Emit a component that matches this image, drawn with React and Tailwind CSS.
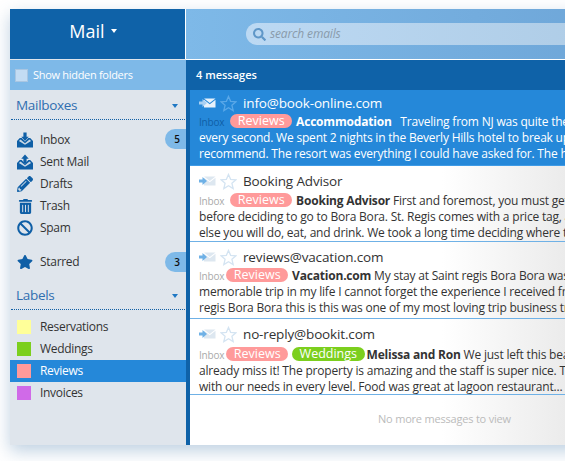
import React from 'react';
import { FaPencilAlt, FaTrashAlt, FaBan, FaStar, FaSearch } from 'react-icons/fa';

const font = "font-['Open_Sans','Noto_Sans',sans-serif]";

function TrayIcon({ up }) {
  return (
    <svg width="17" height="16" viewBox="0 0 17 16" className="text-[#0f5fa6]">
      <path fill="currentColor" d="M0 9 L3 6 H5 L8.5 9.5 L12 6 H14 L17 9 V16 H0 Z" />
      <path fill="#dfe5ec" d="M2 9 L3.8 7.4 L8.5 11.5 L13.2 7.4 L15 9 L8.5 13 Z" opacity="0.9" />
      {up ? (
        <path fill="currentColor" d="M8.5 0 L12.5 4.5 H10.2 V9 H6.8 V4.5 H4.5 Z" />
      ) : (
        <path fill="currentColor" d="M6.8 0 H10.2 V4.5 H12.5 L8.5 9 L4.5 4.5 H6.8 Z" />
      )}
    </svg>
  );
}

function Caret({ className }) {
  return <span className={`w-0 h-0 border-x-[3.5px] border-x-transparent border-t-[4px] ${className}`} />;
}

function SectionHead({ title }) {
  return (
    <div className="h-[30px] mx-[1px] pl-[5px] pr-[7px] pt-[2px] flex items-center justify-between border-b border-dotted border-[#0f5fa6]">
      <span className="text-[13.5px] tracking-[-0.3px] text-[#2f6eb0]">{title}</span>
      <Caret className="border-t-[#1f78c4]" />
    </div>
  );
}

function NavItem({ icon, label, count, height = 'h-[22px]' }) {
  return (
    <div className={`${height} pl-[7px] flex items-center relative text-[12px] tracking-[-0.3px] text-[#333]`}>
      <span className="w-[16px] flex justify-center text-[#0f5fa6]">{icon}</span>
      <span className="ml-[7px]">{label}</span>
      {count && (
        <span className="absolute right-0 top-[1px] w-[21px] h-[20px] rounded-l-full bg-[#7eb9e8] text-[10px] font-semibold text-[#111] flex items-center justify-center pl-[3px]">
          {count}
        </span>
      )}
    </div>
  );
}

function LabelItem({ color, label, active }) {
  return (
    <div className={`h-[22px] pl-[7px] flex items-center text-[12px] tracking-[-0.3px] ${active ? 'bg-[#2588d9] text-white' : 'text-[#333]'}`}>
      <span className={`w-[14px] h-[14px] ${color}`} />
      <span className="ml-[9px]">{label}</span>
    </div>
  );
}

function Pill({ color, children, className = '' }) {
  return (
    <span className={`inline-block h-[14px] leading-[14px] rounded-full px-[7.5px] text-[12.5px] tracking-normal text-white align-[1px] ${color} ${className}`}>
      {children}
    </span>
  );
}

function Row({ from, tags, who, lines, active, top = 'pt-[4px]', height = 'h-[76px]', bodyGap = '', inboxGap = 'ml-[6px]', whoGap = 'ml-[4px]' }) {
  return (
    <div className={`${height} ${top} pl-[9px] overflow-hidden whitespace-nowrap border-b ${active ? 'bg-[#2588d9] text-white border-[#3f9be6]' : 'text-[#333] border-[#6fb1e6]'}`}>
      <div className="h-[22px] flex items-center">
        <svg width="17" height="10" viewBox="0 0 17 10">
          <path fill={active ? '#e8f2fb' : '#dde7f0'} d="M5 0.5 H16.5 L10.75 5 Z M5 1.8 L10.75 6.3 L16.5 1.8 V9.5 H5 Z" />
          <path fill={active ? '#a9d0f2' : '#6fb1e6'} d="M0 3.5 H3.5 V1 L8 5 L3.5 9 V6.5 H0 Z" />
        </svg>
        <svg width="17" height="17" viewBox="0 0 24 24" className="ml-[4px]" fill="none" stroke={active ? '#5aa8e8' : '#d4e4f2'} strokeWidth="1.8">
          <path d="M12 2 L15 9 L22.5 9.6 L16.8 14.5 L18.6 22 L12 18 L5.4 22 L7.2 14.5 L1.5 9.6 L9 9 Z" />
        </svg>
        <span className={`ml-[6px] text-[13.5px] tracking-[-0.15px] ${active ? 'text-white' : 'text-[#333]'}`}>{from}</span>
      </div>
      <div className="text-[12px] tracking-[-0.2px] leading-[16px]">
        <div className={bodyGap}>
          <span className={`text-[10px] ${active ? 'text-[#0f5fa6]' : 'text-[#aaa]'}`}>Inbox</span>
          {tags.map((t, i) => (
            <Pill key={t} color={t === 'Reviews' ? 'bg-[#ff9a9a]' : 'bg-[#7ccf1e]'} className={i === 0 ? inboxGap : 'ml-[4px]'}>
              {t}
            </Pill>
          ))}
          <b className={`${whoGap} font-bold`}>{who}</b> {lines[0]}
        </div>
        <div>{lines[1]}</div>
        <div>{lines[2]}</div>
      </div>
    </div>
  );
}

export default function App() {
  return (
    <div className={`h-[461px] w-[565px] overflow-hidden bg-white pl-[10px] pt-[9px] ${font}`}>
      <div className="w-[600px] h-[436px] flex shadow-[0_6px_16px_rgba(70,120,170,0.35)]">
        {/* Sidebar */}
        <div className="w-[176px] shrink-0 flex flex-col bg-[#dfe5ec]">
          <div className="h-[50px] bg-[#0f62a8] border-r border-white flex items-center justify-center gap-[6px] pr-[9px] pb-[6px] text-white text-[18px]">
            Mail
            <Caret className="border-t-white" />
          </div>
          <div className="h-[30px] mt-[1px] bg-[#7eb9e8] flex items-center pl-[5px] text-[11px] tracking-[-0.3px] text-white">
            <span className="w-[13px] h-[13px] bg-[#c3dcf3] border border-[#a9c6e2]" />
            <span className="ml-[5px]">Show hidden folders</span>
          </div>
          <SectionHead title="Mailboxes" />
          <div className="mt-[8px]">
            <NavItem icon={<TrayIcon />} label="Inbox" count="5" height="h-[23px]" />
            <NavItem icon={<TrayIcon up />} label="Sent Mail" />
            <NavItem icon={<FaPencilAlt size={16} />} label="Drafts" />
            <NavItem icon={<FaTrashAlt size={15} />} label="Trash" />
            <NavItem icon={<FaBan size={16} />} label="Spam" />
          </div>
          <div className="mt-[12px]">
            <NavItem icon={<FaStar size={16} />} label="Starred" count="3" />
          </div>
          <div className="mt-[7px]">
            <SectionHead title="Labels" />
          </div>
          <div className="mt-[6px]">
            <LabelItem color="bg-[#ffff99]" label="Reservations" />
            <LabelItem color="bg-[#7ccf1e]" label="Weddings" />
            <LabelItem color="bg-[#ff9a9a]" label="Reviews" active />
            <LabelItem color="bg-[#d06ae8]" label="Invoices" />
          </div>
        </div>

        {/* Main */}
        <div className="flex-1 flex flex-col min-w-0">
          <div className="h-[50px] bg-gradient-to-r from-[#7eb9e8] to-[#6ea6d8] flex items-center pl-[60px]">
            <div className="w-[400px] h-[22px] rounded-l-full bg-gradient-to-r from-[#bcd9f3] to-[#aecce6] flex items-center pl-[7px] text-[#5f97c8]">
              <FaSearch size={13} />
              <span className="ml-[4px] text-[12px] tracking-[-0.15px] italic text-[#8a9bab]">search emails</span>
            </div>
          </div>
          <div className="h-[30px] mt-[1px] bg-[#0f62a8] flex items-center pl-[10px] text-[11px] font-semibold text-white">
            4 messages
          </div>
          <div className="flex-1 border-l-[4px] border-[#0f62a8] bg-gradient-to-r from-white from-60% to-[#e4e4e4]">
            <Row
              active
              top="pt-[2px]"
              from="info@book-online.com"
              tags={['Reviews']}
              who="Accommodation"
              lines={[
                '\u00a0 Traveling from NJ was quite the journey but worth',
                'every second. We spent 2 nights in the Beverly Hills hotel to break up the trip and',
                'recommend. The resort was everything I could have asked for. The hotel staff were',
              ]}
            />
            <Row
              bodyGap="mt-[1px]"
              from="Booking Advisor"
              tags={['Reviews']}
              who="Booking Advisor"
              lines={[
                'First and foremost, you must get a good idea',
                'before deciding to go to Bora Bora. St. Regis comes with a price tag, and',
                'else you will do, eat, and drink. We took a long time deciding where to stay',
              ]}
            />
            <Row
              height="h-[77px]"
              from="reviews@vacation.com"
              tags={['Reviews']}
              who="Vacation.com"
              inboxGap="ml-[2px]"
              lines={[
                'My stay at Saint regis Bora Bora was the most',
                'memorable trip in my life I cannot forget the experience I received from',
                'regis Bora Bora this is this was one of my most loving trip business trips',
              ]}
            />
            <Row
              bodyGap="mt-[2px]"
              from="no-reply@bookit.com"
              tags={['Reviews', 'Weddings']}
              who="Melissa and Ron"
              inboxGap="ml-[2px]"
              whoGap="ml-[2px]"
              lines={[
                'We just left this beautiful place and',
                'already miss it! The property is amazing and the staff is super nice. They helped',
                'with our needs in every level. Food was great at lagoon restaurant... and more',
              ]}
            />
            <div className="text-[11px] tracking-[-0.2px] text-[#bbb] pt-[16px] pl-[188px]">No more messages to view</div>
          </div>
        </div>
      </div>
    </div>
  );
}
